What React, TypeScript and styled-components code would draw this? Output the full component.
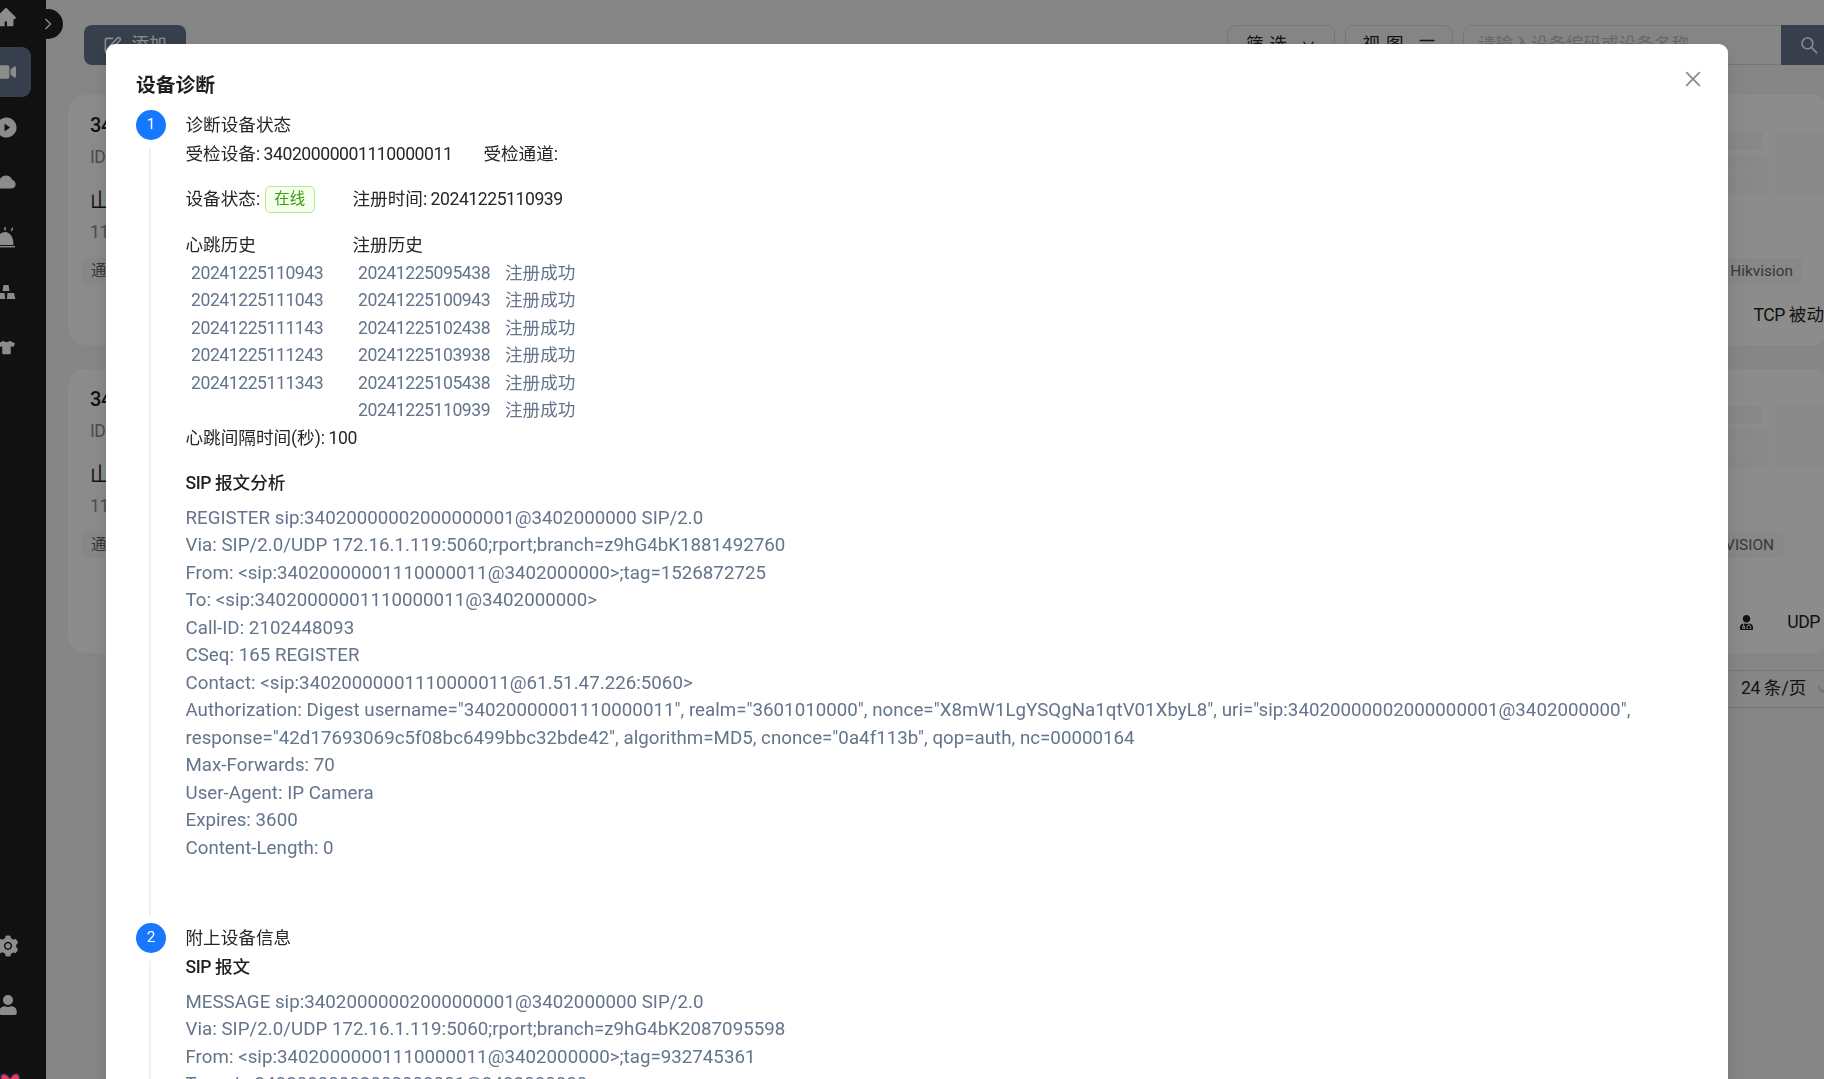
import React from "react";
import styled, { createGlobalStyle } from "styled-components";
import { AiFillHome, AiFillPlayCircle, AiFillCloud, AiFillSetting, AiOutlineSearch, AiOutlineDown, AiOutlineClose } from "react-icons/ai";
import { FaVideo, FaTshirt, FaUser, FaUserMd } from "react-icons/fa";
import { LuSquarePen, LuAlignJustify } from "react-icons/lu";

const Global = createGlobalStyle`
  html, body { margin: 0; padding: 0; height: 100%; overflow: hidden; background: #f5f5f5; }
  body { font-family: Roboto, "Noto Sans CJK SC", sans-serif; font-size: 17.6px; line-height: 27.5px; letter-spacing: -0.45px; color: #262626; }
  * { box-sizing: border-box; }
`;

const Page = styled.div`display: flex; width: 1824px; height: 1079px; overflow: hidden;`;
const Sidebar = styled.nav`width: 46px; flex: none; height: 100%; background: #1f1f1f; display: flex; flex-direction: column; padding: 0; overflow: hidden;`;
const NavList = styled.div`display: flex; flex-direction: column; gap: 5px; margin-top: -8px; margin-left: -19px;`;
const NavItem = styled.div<{ $active?: boolean }>`
  width: 50px; height: 50px; flex: none; display: flex; align-items: center; justify-content: center;
  border-radius: 9px; color: #fff; background: ${(p) => (p.$active ? "#64748b" : "transparent")};
`;
const NavFooter = styled.div`margin-top: auto; margin-left: -17px; display: flex; flex-direction: column; margin-bottom: -16px;`;
const FooterItem = styled.div`width: 50px; height: 59px; flex: none; display: flex; align-items: center; justify-content: center; color: #fff;`;
const Collapse = styled.div`position: absolute; left: 33px; top: 9px; width: 30px; height: 30px; border-radius: 15px; background: #1f1f1f; color: #fff; display: flex; align-items: center; justify-content: center;`;

const Main = styled.main`flex: 1; min-width: 0; overflow: hidden; padding: 25px 0 0 22px; background: #f5f5f5;`;
const Toolbar = styled.div`display: flex; align-items: stretch; height: 40px; width: 1776px; margin-left: 16px; margin-bottom: 30px;`;
const AddButton = styled.button`
  width: 102px; border: 0; border-radius: 8px; background: #64748b; color: #fff; font: inherit; letter-spacing: 0;
  display: flex; align-items: center; justify-content: center; gap: 9px; padding: 0;
`;
const Spacer = styled.div`flex: 1;`;
const GhostButton = styled.button`
  width: 108px; margin-right: 10px; border: 1px solid #d9d9d9; border-radius: 9px; background: transparent; color: #262626; font: inherit; letter-spacing: 6px;
  display: flex; align-items: center; justify-content: center; gap: 8px; padding: 0;
`;
const SearchBox = styled.div`width: 318px; border: 1px solid #d9d9d9; border-right: 0; border-radius: 9px 0 0 9px; padding-left: 14px; color: #bfbfbf; letter-spacing: 0; display: flex; align-items: center;`;
const SearchButton = styled.div`width: 79px; background: #64748b; color: #fff; display: flex; align-items: center; padding-left: 18px;`;

const Card = styled.section<{ $h: number }>`
  position: relative; width: 1762px; height: ${(p) => p.$h}px; margin-bottom: 24px; background: #fff; border-radius: 18px; padding: 16px 6px 0 13px;
`;
const CardHead = styled.div`padding-left: 9px; display: flex; flex-direction: column;`;
const DevId = styled.div`font-size: 20px; font-weight: 500; line-height: 28px; color: #1f1f1f; margin-bottom: 4px;`;
const Muted = styled.div`color: #8c8c8c; line-height: 28px; margin-bottom: 16px;`;
const DevName = styled.div`font-size: 20px; line-height: 28px; color: #1f1f1f; margin-bottom: 3px;`;
const TagRow = styled.div<{ $pr: number }>`display: flex; justify-content: space-between; padding-right: ${(p) => p.$pr}px; margin-top: -4px;`;
const GreyTag = styled.span`height: 26px; line-height: 26px; padding: 0 10px; border-radius: 5px; color: #666; font-size: 15.4px; letter-spacing: 0; background: #f7f7f7;`;
const ProtoRow = styled.div<{ $mt: number; $mr: number }>`display: flex; justify-content: flex-end; align-items: center; gap: 33px; margin-top: ${(p) => p.$mt}px; margin-right: ${(p) => p.$mr}px; color: #1f1f1f; white-space: nowrap;`;
const Zh = styled.span`letter-spacing: 0;`;
const Watermark = styled.svg`position: absolute; right: 0; top: 37px;`;
const Pager = styled.div`display: flex; justify-content: flex-end; width: 1767px; margin-top: -7px;`;
const PageSelect = styled.div`width: 120px; height: 38px; flex: none; border: 1px solid #d9d9d9; border-radius: 9px; display: flex; align-items: center; padding-left: 25px; gap: 10px; color: #262626; white-space: nowrap;`;

const Overlay = styled.div`position: fixed; inset: 0; background: rgba(0,0,0,.45); overflow: hidden; padding: 44px 0 0 106px;`;
const Modal = styled.div`
  position: relative; width: 1622px; height: 1200px; background: #fff; border-radius: 9px; padding: 28px 0 0 30px;
  box-shadow: 0 6px 16px rgba(0,0,0,.08), 0 3px 6px -4px rgba(0,0,0,.12), 0 9px 28px 8px rgba(0,0,0,.05);
`;
const CloseBtn = styled.div`position: absolute; right: 24px; top: 24px; color: #8c8c8c; display: flex;`;
const Title = styled.h2`margin: 0 0 9.5px; font-size: 19.8px; line-height: 28px; font-weight: 600; letter-spacing: 0; color: #1f1f1f;`;
const Step = styled.div`display: flex; gap: 19.5px; width: 1560px;`;
const IconCol = styled.div`width: 30px; flex: none; display: flex; flex-direction: column; align-items: center;`;
const Bubble = styled.div`width: 30px; height: 30px; flex: none; border-radius: 50%; background: #1677ff; color: #fff; font-size: 15.4px; letter-spacing: 0; display: flex; align-items: center; justify-content: center; padding-top: 1px;`;
const Tail = styled.div`flex: 1; width: 2px; background: #f0f0f0; margin: 8px 2px 7px 0;`;
const Body = styled.div<{ $pb?: number }>`flex: 1; min-width: 0; padding-bottom: ${(p) => p.$pb ?? 0}px; color: #262626;`;
const StepTitle = styled.div`line-height: 30px; margin-bottom: 1px; letter-spacing: 0;`;
const InfoRow = styled.div`display: flex;`;
const InfoGap = styled.span`margin-left: 31px;`;
const StatusRow = styled.div`display: grid; grid-template-columns: 167px auto; margin-top: 18px; align-items: center;`;
const OnlineTag = styled.span`display: inline-block; margin-left: 5px; width: 50px; height: 27px; line-height: 25px; text-align: center; vertical-align: top; font-size: 15.4px; letter-spacing: 0; color: #389e0d; background: #f6ffed; border: 1px solid #b7eb8f; border-radius: 5px;`;
const HistoryGrid = styled.div`display: grid; grid-template-columns: 167px 147px auto; justify-content: start; margin-top: 18.5px;`;
const HistHead = styled.div<{ $span?: number }>`grid-column: span ${(p) => p.$span ?? 1}; letter-spacing: 0;`;
const HistCell = styled.div`padding-left: 5.5px; color: #64748b;`;
const SipHead = styled.div<{ $mt: number }>`margin-top: ${(p) => p.$mt}px; font-weight: 500; color: #1f1f1f;`;
const SipBlock = styled.div`margin-top: 7.5px; color: #64748b; font-size: 18.7px; letter-spacing: 0.03px;`;

const hb = ["20241225110943","20241225111043","20241225111143","20241225111243","20241225111343",""];
const reg = ["20241225095438","20241225100943","20241225102438","20241225103938","20241225105438","20241225110939"];
const sip1 = [
  "REGISTER sip:34020000002000000001@3402000000 SIP/2.0",
  "Via: SIP/2.0/UDP 172.16.1.119:5060;rport;branch=z9hG4bK1881492760",
  "From: <sip:34020000001110000011@3402000000>;tag=1526872725",
  "To: <sip:34020000001110000011@3402000000>",
  "Call-ID: 2102448093",
  "CSeq: 165 REGISTER",
  "Contact: <sip:34020000001110000011@61.51.47.226:5060>",
  'Authorization: Digest username="34020000001110000011", realm="3601010000", nonce="X8mW1LgYSQgNa1qtV01XbyL8", uri="sip:34020000002000000001@3402000000", response="42d17693069c5f08bc6499bbc32bde42", algorithm=MD5, cnonce="0a4f113b", qop=auth, nc=00000164',
  "Max-Forwards: 70",
  "User-Agent: IP Camera",
  "Expires: 3600",
  "Content-Length: 0",
];
const sip2 = [
  "MESSAGE sip:34020000002000000001@3402000000 SIP/2.0",
  "Via: SIP/2.0/UDP 172.16.1.119:5060;rport;branch=z9hG4bK2087095598",
  "From: <sip:34020000001110000011@3402000000>;tag=932745361",
  "To: <sip:34020000002000000001@3402000000>",
];

const AlarmIcon = () => (
  <svg width="22" height="22" viewBox="0 0 22 22" fill="currentColor">
    <path d="M1.500 19c0-8 3.500-13 8.500-13s8.500 5 8.500 13z" />
    <rect x="0" y="20" width="20" height="1.400" />
    <rect x="9.300" y="1" width="1.500" height="3.500" />
    <path d="M17 1.500l1.300.6-1.400 3.400-1.200-.7z" />
  </svg>
);
const ClusterIcon = () => (
  <svg width="20" height="16" viewBox="0 0 20 16" fill="currentColor">
    <path d="M7.500 1h5l1 6h-7z" />
    <path d="M2 9h6.500l.7 6H.6z" />
    <path d="M11.500 9H18l1.400 6h-8.500z" />
  </svg>
);
const LogoMark = styled.svg`flex: none; margin: 37px 0 0 17px; position: relative; z-index: 1;`;

const Mark = () => (
  <Watermark width="150" height="62" viewBox="0 0 150 62">
    <rect x="0" y="0" width="83" height="18" fill="rgba(0,0,0,.03)" />
    <rect x="0" y="23" width="87" height="39" fill="rgba(0,0,0,.025)" />
    <rect x="54" y="40" width="16" height="4" fill="rgba(255,255,255,.5)" />
    <rect x="95" y="0" width="55" height="62" fill="rgba(0,0,0,.025)" />
    <rect x="114" y="19" width="26" height="5" fill="rgba(255,255,255,.5)" />
    <rect x="114" y="40" width="26" height="5" fill="rgba(255,255,255,.5)" />
  </Watermark>
);

export default function App() {
  return (
    <>
      <Global />
      <Page>
        <Sidebar>
          <NavList>
            <NavItem><AiFillHome size={22} /></NavItem>
            <NavItem $active><FaVideo size={20} /></NavItem>
            <NavItem><AiFillPlayCircle size={23} /></NavItem>
            <NavItem><AiFillCloud size={22} /></NavItem>
            <NavItem><AlarmIcon /></NavItem>
            <NavItem><ClusterIcon /></NavItem>
            <NavItem><FaTshirt size={17} /></NavItem>
          </NavList>
          <NavFooter>
            <FooterItem><AiFillSetting size={24} /></FooterItem>
            <FooterItem><FaUser size={20} /></FooterItem>
            <LogoMark width="24" height="24" viewBox="0 0 24 24">
              <path d="M1 4c4-3 7 0 9 3 3-4 6-6 9-3 3 5-3 13-9 18C4 17-1 10 1 4z" fill="#f0365a" stroke="#13294b" strokeWidth="1.500" />
            </LogoMark>
          </NavFooter>
        </Sidebar>
        <Collapse>
          <svg width="10" height="14" viewBox="0 0 10 14" fill="none" stroke="currentColor" strokeWidth="1.400"><path d="M2.500 2l5 5-5 5" /></svg>
        </Collapse>
        <Main>
          <Toolbar>
            <AddButton><LuSquarePen size={19} /><span>添加</span></AddButton>
            <Spacer />
            <GhostButton>筛选<AiOutlineDown size={15} /></GhostButton>
            <GhostButton>视图<LuAlignJustify size={18} /></GhostButton>
            <SearchBox>请输入设备编码或设备名称</SearchBox>
            <SearchButton><AiOutlineSearch size={21} /></SearchButton>
          </Toolbar>
          <Card $h={250}>
            <Mark />
            <CardHead>
              <DevId>34020000001110000011</DevId>
              <Muted>ID: 34020000001110000011</Muted>
              <DevName><Zh>山东测试设备</Zh></DevName>
              <Muted>112.35.1.119:5060</Muted>
            </CardHead>
            <TagRow $pr={21}>
              <GreyTag>通道数 1</GreyTag>
              <GreyTag>厂商 Hikvision</GreyTag>
            </TagRow>
            <ProtoRow $mt={18} $mr={0}><span>TCP <Zh>被动</Zh></span></ProtoRow>
          </Card>
          <Card $h={284}>
            <Mark />
            <CardHead>
              <DevId>34020000001320000001</DevId>
              <Muted>ID: 34020000001320000001</Muted>
              <DevName><Zh>山东测试摄像头</Zh></DevName>
              <Muted>112.35.1.120:5060</Muted>
            </CardHead>
            <TagRow $pr={40}>
              <GreyTag>通道数 1</GreyTag>
              <GreyTag>厂商 HIKVISION</GreyTag>
            </TagRow>
            <ProtoRow $mt={51} $mr={-35}>
              <FaUserMd size={15} />
              <span>UDP <Zh>被动</Zh></span>
            </ProtoRow>
          </Card>
          <Pager>
            <PageSelect><span>24 <Zh>条/页</Zh></span><AiOutlineDown size={13} color="#bfbfbf" /></PageSelect>
          </Pager>
        </Main>
      </Page>
      <Overlay>
        <Modal>
          <CloseBtn><AiOutlineClose size={22} /></CloseBtn>
          <Title>设备诊断</Title>
          <Step>
            <IconCol><Bubble>1</Bubble><Tail /></IconCol>
            <Body $pb={60.5}>
              <StepTitle>诊断设备状态</StepTitle>
              <InfoRow>
                <span><Zh>受检设备</Zh>: 34020000001110000011</span>
                <InfoGap><Zh>受检通道</Zh>:</InfoGap>
              </InfoRow>
              <StatusRow>
                <span><Zh>设备状态</Zh>:<OnlineTag>在线</OnlineTag></span>
                <span><Zh>注册时间</Zh>: 20241225110939</span>
              </StatusRow>
              <HistoryGrid>
                <HistHead>心跳历史</HistHead>
                <HistHead $span={2}>注册历史</HistHead>
                {reg.map((r, i) => (
                  <React.Fragment key={r}>
                    <HistCell>{hb[i]}</HistCell>
                    <HistCell>{r}</HistCell>
                    <HistCell><Zh>注册成功</Zh></HistCell>
                  </React.Fragment>
                ))}
              </HistoryGrid>
              <div><Zh>心跳间隔时间(秒)</Zh>: 100</div>
              <SipHead $mt={17.5}>SIP <Zh>报文分析</Zh></SipHead>
              <SipBlock>{sip1.map((l) => <div key={l}>{l}</div>)}</SipBlock>
            </Body>
          </Step>
          <Step>
            <IconCol><Bubble>2</Bubble><Tail /></IconCol>
            <Body>
              <StepTitle>附上设备信息</StepTitle>
              <SipHead $mt={0}>SIP <Zh>报文</Zh></SipHead>
              <SipBlock>{sip2.map((l) => <div key={l}>{l}</div>)}</SipBlock>
            </Body>
          </Step>
        </Modal>
      </Overlay>
    </>
  );
}
